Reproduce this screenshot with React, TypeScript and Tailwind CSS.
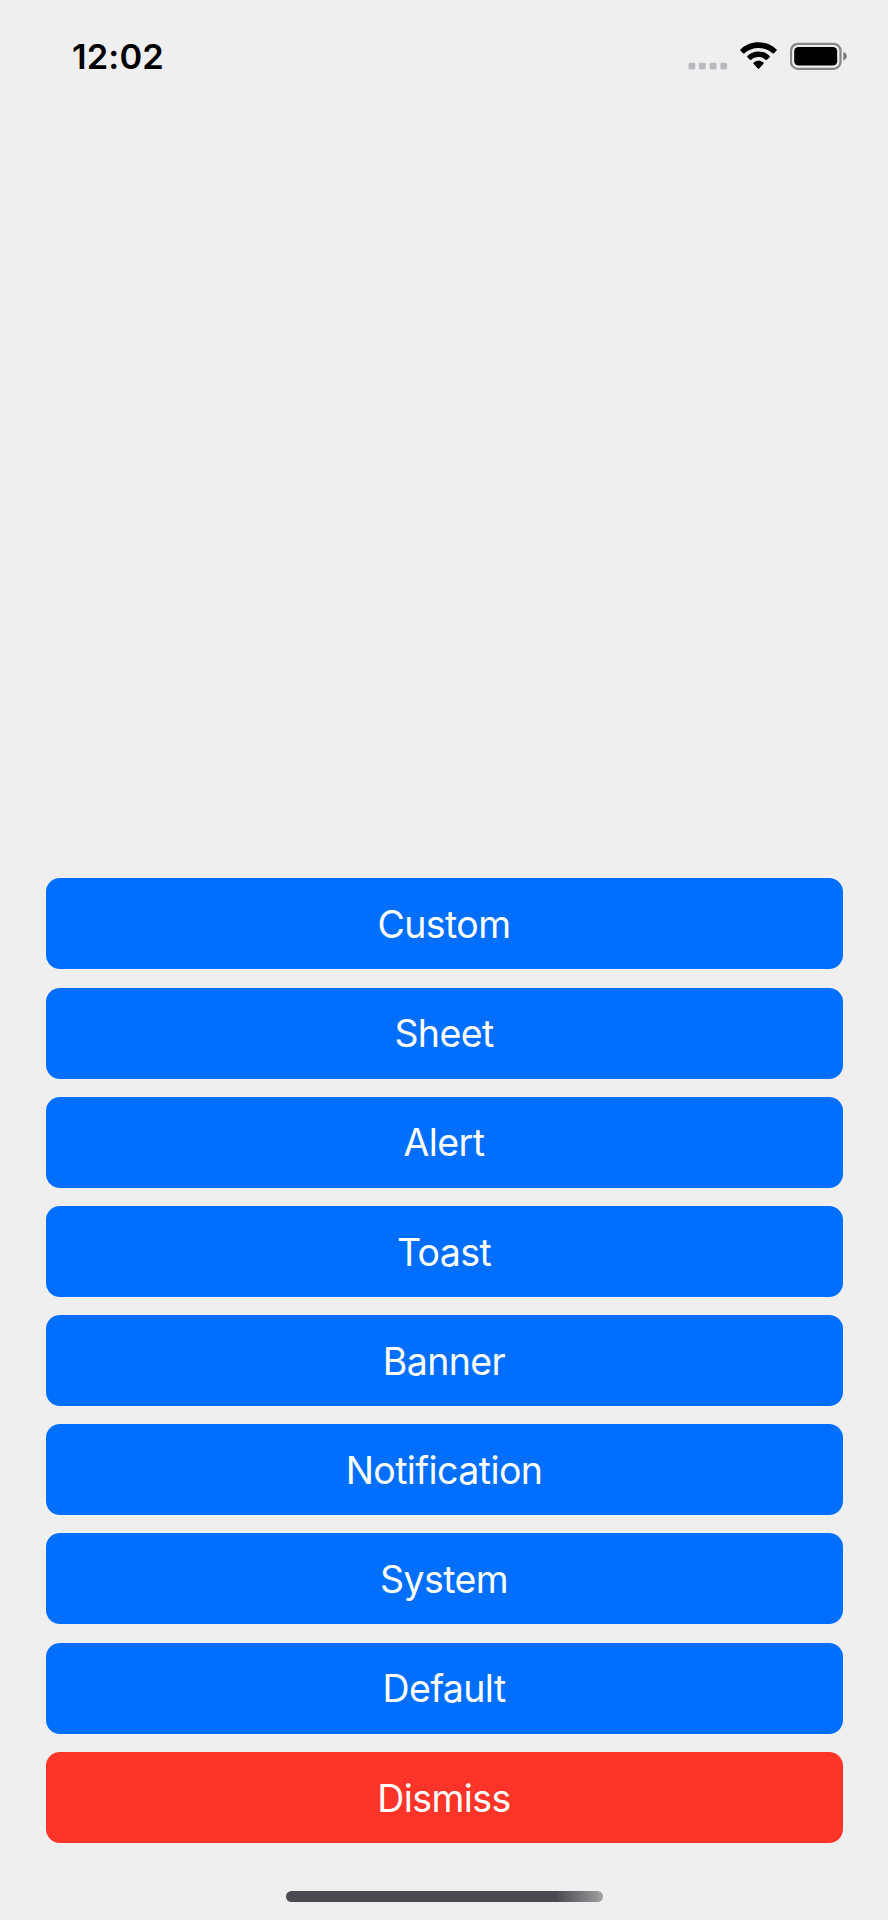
const actions = [
  "Custom",
  "Sheet",
  "Alert",
  "Toast",
  "Banner",
  "Notification",
  "System",
  "Default",
];

function SignalDots() {
  return (
    <svg className="h-2 w-10" viewBox="0 0 40 8" fill="#b9b9c0">
      <rect x="0.5" y="0.8" width="6.8" height="6.6" rx="1.4" />
      <rect x="11" y="0.8" width="6.8" height="6.6" rx="1.4" />
      <rect x="21.7" y="0.8" width="6.8" height="6.6" rx="1.4" />
      <rect x="32.3" y="0.8" width="6.8" height="6.6" rx="1.4" />
    </svg>
  );
}

function WifiIcon() {
  return (
    <svg className="h-7 w-[37px]" viewBox="0 0 37 28" fill="black">
      <path d="M18.5 0.3C25.4 0.3 31.8 2.9 36.5 7.4C36.9 7.8 36.9 8.3 36.5 8.7L33.9 11.3C33.5 11.7 32.9 11.7 32.5 11.3C28.9 7.9 24 5.9 18.5 5.9C13 5.9 8.1 7.9 4.5 11.3C4.1 11.7 3.5 11.7 3.1 11.3L0.5 8.7C0.1 8.3 0.1 7.8 0.5 7.4C5.2 2.9 11.6 0.3 18.5 0.3Z" />
      <path d="M18.5 9.5C22.9 9.5 26.7 11.1 29.6 13.9C30 14.3 30 14.8 29.6 15.2L27 17.8C26.6 18.2 26.1 18.2 25.7 17.8C23.8 16.1 21.3 15.1 18.5 15.1C15.7 15.1 13.2 16.1 11.3 17.8C10.9 18.2 10.4 18.2 10 17.8L7.4 15.2C7 14.8 7 14.3 7.4 13.9C10.3 11.1 14.1 9.5 18.5 9.5Z" />
      <path d="M18.5 18.7C20.4 18.7 22 19.3 23.4 20.4C23.9 20.8 23.9 21.3 23.5 21.7L19.2 26.4C18.8 26.8 18.2 26.8 17.8 26.4L13.5 21.7C13.1 21.3 13.1 20.8 13.6 20.4C15 19.3 16.6 18.7 18.5 18.7Z" />
    </svg>
  );
}

function BatteryIcon() {
  return (
    <svg className="h-7 w-[57px]" viewBox="0 0 57 28" fill="none">
      <rect x="1" y="1.8" width="49.5" height="25" rx="7" stroke="#85858b" strokeWidth="2.2" />
      <rect x="4.2" y="5" width="43" height="18.600" rx="4.3" fill="black" />
      <path d="M53.4 10C55.5 10.7 56.6 12.2 56.6 14.2C56.6 16.2 55.5 17.700 53.4 18.4Z" fill="#74747a" />
    </svg>
  );
}

function ActionButton({ label, tone = "bg-[#006fff]" }: { label: string; tone?: string }) {
  return (
    <button
      className={`flex h-[91px] w-full shrink-0 items-center justify-center rounded-[14px] pt-[2px] text-[37.5px] leading-none font-normal tracking-[-0.6px] text-white ${tone}`}
    >
      {label}
    </button>
  );
}

export default function App() {
  return (
    <main className="flex h-[1920px] w-[888px] flex-col bg-[#efeff0] font-['Inter',sans-serif]">
      <header className="flex h-28 items-start justify-between pt-[42px] pr-[41px] pl-[72px]">
        <time className="text-[34.5px] leading-[30px] font-semibold tracking-[0.1px] text-black">12:02</time>
        <div className="flex items-start">
          <div className="mt-[20px] mr-[12px] flex">
            <SignalDots />
          </div>
          <WifiIcon />
          <div className="ml-[13px]">
            <BatteryIcon />
          </div>
        </div>
      </header>
      <section className="mt-auto flex flex-col gap-[18.2px] px-[45.5px]">
        {actions.map((label) => (
          <ActionButton key={label} label={label} />
        ))}
        <ActionButton label="Dismiss" tone="bg-[#ff3429]" />
      </section>
      <footer className="flex h-[77.2px] shrink-0 items-start justify-center pt-[47.700px]">
        <div className="h-[11px] w-[317px] rounded-full bg-linear-to-r from-[#4a4a50] from-85% to-[#a0a0a2]" />
      </footer>
    </main>
  );
}
